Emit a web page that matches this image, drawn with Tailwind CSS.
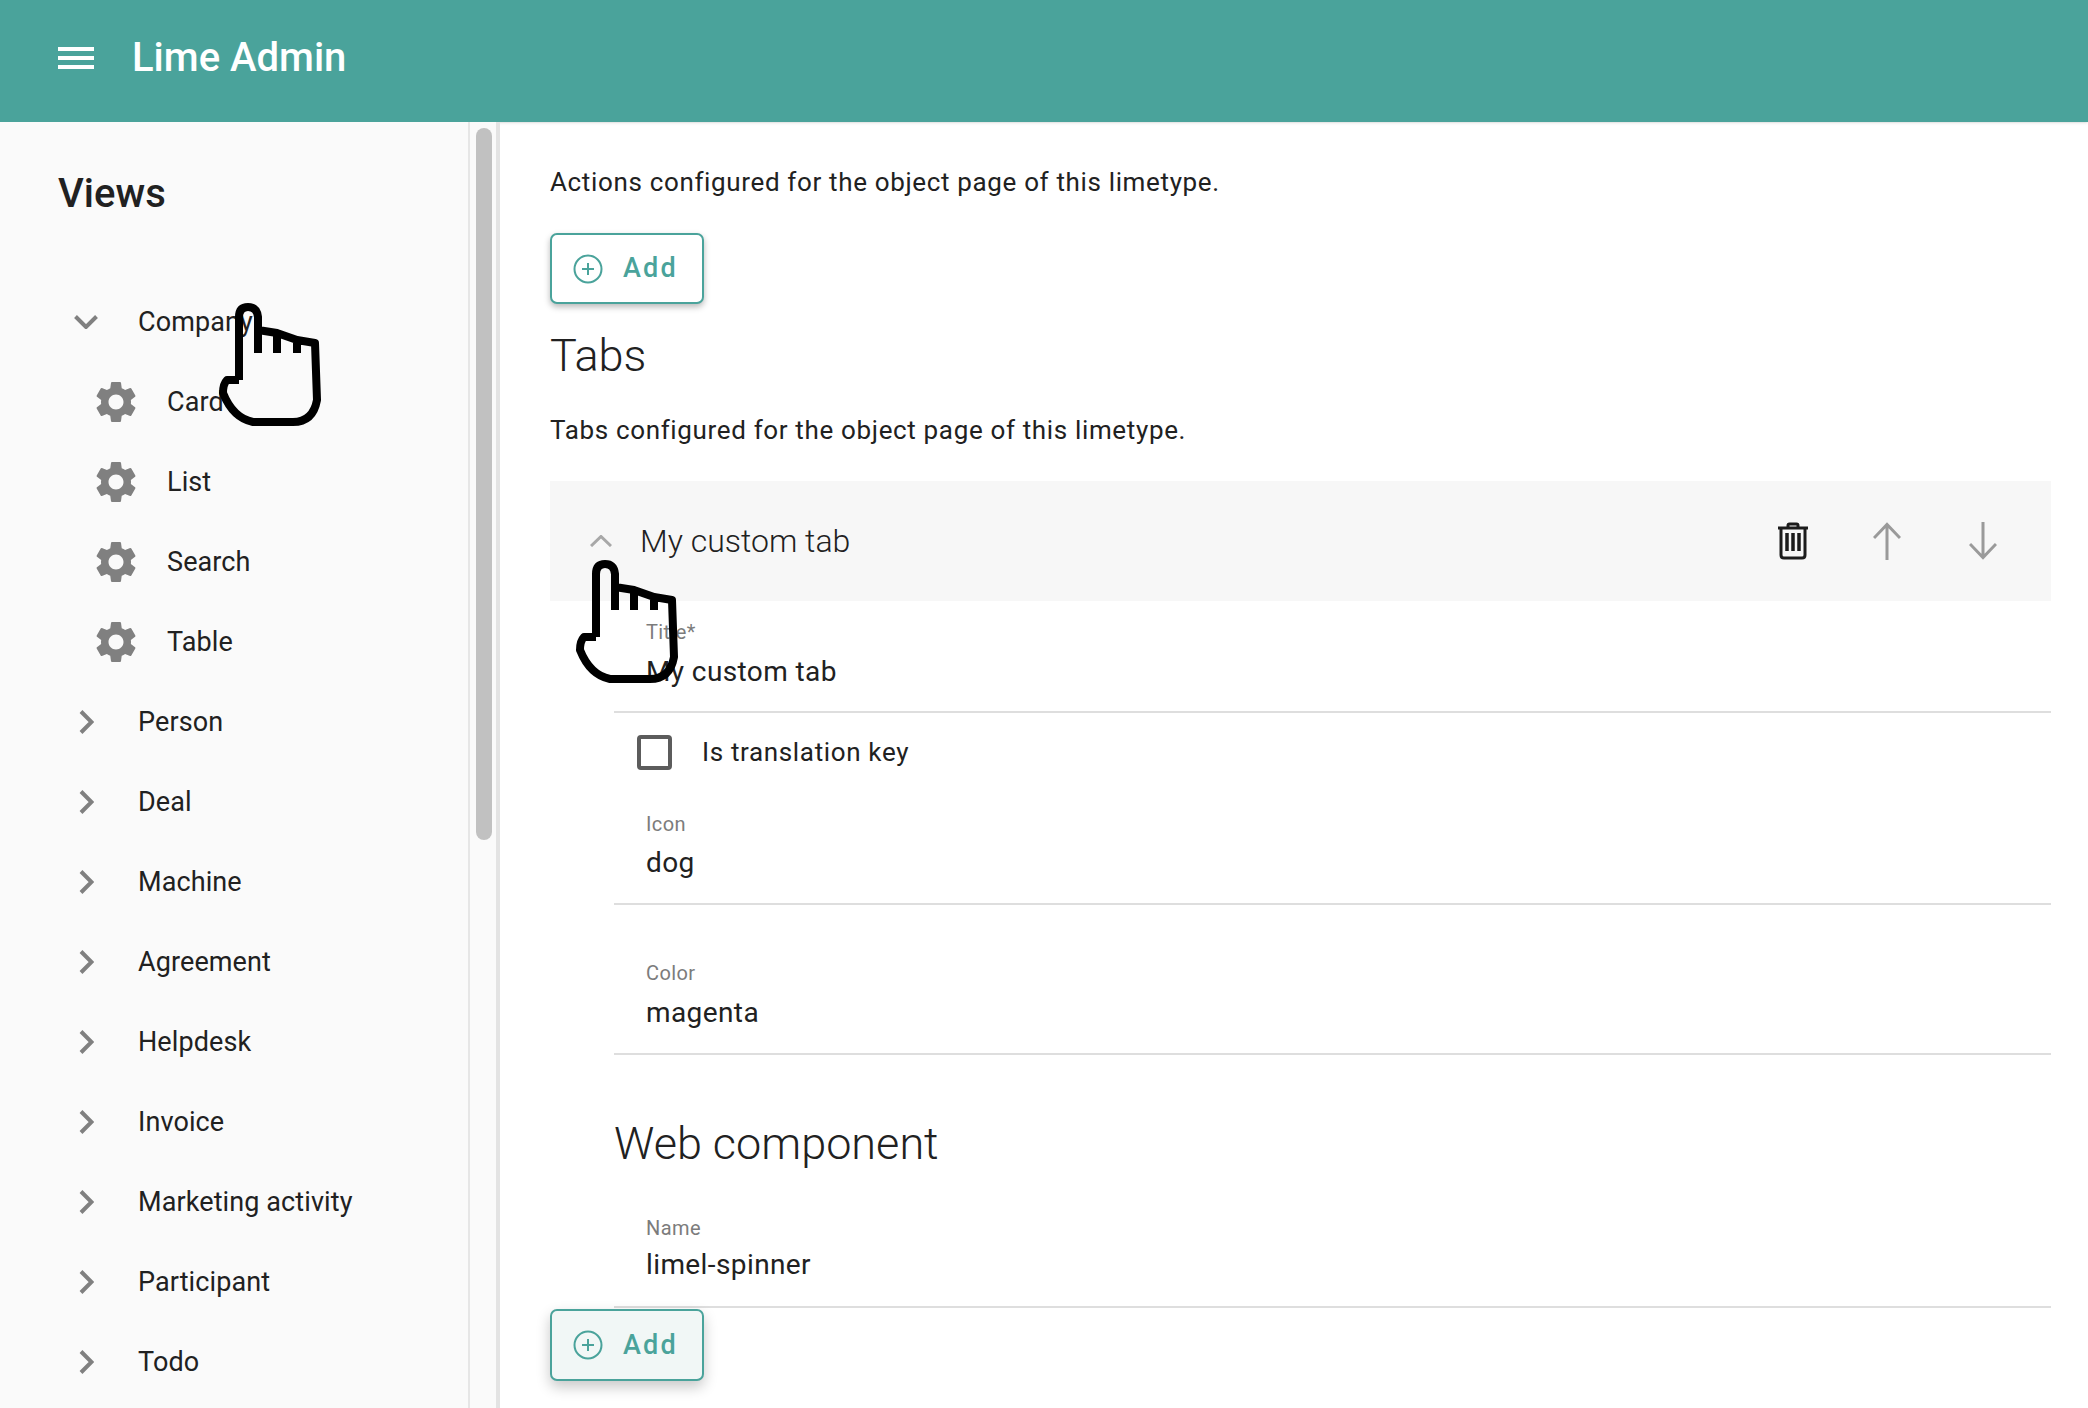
<!DOCTYPE html>
<html lang="en">
<head>
    <meta charset="UTF-8">
    <title>Lime Admin</title>
    <script src="https://cdn.jsdelivr.net/npm/@tailwindcss/browser@4"></script>
</head>
<body class="relative w-[2088px] h-[1408px] overflow-hidden bg-white font-[Roboto,sans-serif] text-[#212121]">
    <!-- Top bar -->
    <header class="h-[122px] bg-[#4aa39b] flex items-center pl-[58px] pb-[6px] shadow-sm">
        <div class="w-[36px] flex flex-col gap-[5px]">
            <span class="block h-[4px] bg-white"></span>
            <span class="block h-[4px] bg-white"></span>
            <span class="block h-[4px] bg-white"></span>
        </div>
        <h1 class="ml-[38px] text-[40px] font-medium text-white leading-none">Lime Admin</h1>
    </header>

    <div class="flex h-[1286px]">
        <!-- Sidebar -->
        <aside class="relative w-[470px] shrink-0 bg-[#fafafa] border-r-2 border-[#e6e6e6] overflow-hidden">
            <h2 class="ml-[58px] mt-[48px] h-[48px] text-[40px] leading-[48px] font-medium">Views</h2>
            <ul class="mt-[64px] text-[27px] tracking-[0.1px]">
                <li class="h-20 flex items-center">
                    <svg class="ml-[74px] w-[24px] h-[14px]" viewBox="0 0 24 14" fill="none" stroke="#808080" stroke-width="4"><path d="M1.5 1.5 12 12 22.5 1.5"/></svg>
                    <span class="ml-[40px]">Company</span>
                </li>
                <li class="h-20 flex items-center">
                    <svg class="ml-[91px] w-[50px] h-[50px]" viewBox="0 0 24 24" fill="#808080"><path d="M19.14,12.94c0.04-0.3,0.06-0.61,0.06-0.94c0-0.32-0.02-0.64-0.07-0.94l2.03-1.58c0.18-0.14,0.23-0.41,0.12-0.61 l-1.92-3.32c-0.12-0.22-0.37-0.29-0.59-0.22l-2.39,0.96c-0.5-0.38-1.03-0.7-1.62-0.94L14.4,2.81c-0.04-0.24-0.24-0.41-0.48-0.41 h-3.84c-0.24,0-0.43,0.17-0.47,0.41L9.25,5.35C8.66,5.59,8.12,5.92,7.63,6.29L5.24,5.33c-0.22-0.08-0.47,0-0.59,0.22L2.74,8.87 C2.62,9.08,2.66,9.34,2.86,9.48l2.03,1.58C4.84,11.36,4.8,11.69,4.8,12s0.02,0.64,0.07,0.94l-2.03,1.58 c-0.18,0.14-0.23,0.41-0.12,0.61l1.92,3.32c0.12,0.22,0.37,0.29,0.59,0.22l2.39-0.96c0.5,0.38,1.03,0.7,1.62,0.94l0.36,2.54 c0.05,0.24,0.24,0.41,0.48,0.41h3.84c0.24,0,0.44-0.17,0.47-0.41l0.36-2.54c0.59-0.24,1.13-0.56,1.62-0.94l2.39,0.96 c0.22,0.08,0.47,0,0.59-0.22l1.92-3.32c0.12-0.22,0.07-0.47-0.12-0.61L19.14,12.94z M12,15.6c-1.98,0-3.6-1.62-3.6-3.6 s1.62-3.6,3.6-3.6s3.6,1.62,3.6,3.6S13.98,15.6,12,15.6z"/></svg>
                    <span class="ml-[26px]">Card</span>
                </li>
                <li class="h-20 flex items-center">
                    <svg class="ml-[91px] w-[50px] h-[50px]" viewBox="0 0 24 24" fill="#808080"><path d="M19.14,12.94c0.04-0.3,0.06-0.61,0.06-0.94c0-0.32-0.02-0.64-0.07-0.94l2.03-1.58c0.18-0.14,0.23-0.41,0.12-0.61 l-1.92-3.32c-0.12-0.22-0.37-0.29-0.59-0.22l-2.39,0.96c-0.5-0.38-1.03-0.7-1.62-0.94L14.4,2.81c-0.04-0.24-0.24-0.41-0.48-0.41 h-3.84c-0.24,0-0.43,0.17-0.47,0.41L9.25,5.35C8.66,5.59,8.12,5.92,7.63,6.29L5.24,5.33c-0.22-0.08-0.47,0-0.59,0.22L2.74,8.87 C2.62,9.08,2.66,9.34,2.86,9.48l2.03,1.58C4.84,11.36,4.8,11.69,4.8,12s0.02,0.64,0.07,0.94l-2.03,1.58 c-0.18,0.14-0.23,0.41-0.12,0.61l1.92,3.32c0.12,0.22,0.37,0.29,0.59,0.22l2.39-0.96c0.5,0.38,1.03,0.7,1.62,0.94l0.36,2.54 c0.05,0.24,0.24,0.41,0.48,0.41h3.84c0.24,0,0.44-0.17,0.47-0.41l0.36-2.54c0.59-0.24,1.13-0.56,1.62-0.94l2.39,0.96 c0.22,0.08,0.47,0,0.59-0.22l1.92-3.32c0.12-0.22,0.07-0.47-0.12-0.61L19.14,12.94z M12,15.6c-1.98,0-3.6-1.62-3.6-3.6 s1.62-3.6,3.6-3.6s3.6,1.62,3.6,3.6S13.98,15.6,12,15.6z"/></svg>
                    <span class="ml-[26px]">List</span>
                </li>
                <li class="h-20 flex items-center">
                    <svg class="ml-[91px] w-[50px] h-[50px]" viewBox="0 0 24 24" fill="#808080"><path d="M19.14,12.94c0.04-0.3,0.06-0.61,0.06-0.94c0-0.32-0.02-0.64-0.07-0.94l2.03-1.58c0.18-0.14,0.23-0.41,0.12-0.61 l-1.92-3.32c-0.12-0.22-0.37-0.29-0.59-0.22l-2.39,0.96c-0.5-0.38-1.03-0.7-1.62-0.94L14.4,2.81c-0.04-0.24-0.24-0.41-0.48-0.41 h-3.84c-0.24,0-0.43,0.17-0.47,0.41L9.25,5.35C8.66,5.59,8.12,5.92,7.63,6.29L5.24,5.33c-0.22-0.08-0.47,0-0.59,0.22L2.74,8.87 C2.62,9.08,2.66,9.34,2.86,9.48l2.03,1.58C4.84,11.36,4.8,11.69,4.8,12s0.02,0.64,0.07,0.94l-2.03,1.58 c-0.18,0.14-0.23,0.41-0.12,0.61l1.92,3.32c0.12,0.22,0.37,0.29,0.59,0.22l2.39-0.96c0.5,0.38,1.03,0.7,1.62,0.94l0.36,2.54 c0.05,0.24,0.24,0.41,0.48,0.41h3.84c0.24,0,0.44-0.17,0.47-0.41l0.36-2.54c0.59-0.24,1.13-0.56,1.62-0.94l2.39,0.96 c0.22,0.08,0.47,0,0.59-0.22l1.92-3.32c0.12-0.22,0.07-0.47-0.12-0.61L19.14,12.94z M12,15.6c-1.98,0-3.6-1.62-3.6-3.6 s1.62-3.6,3.6-3.6s3.6,1.62,3.6,3.6S13.98,15.6,12,15.6z"/></svg>
                    <span class="ml-[26px]">Search</span>
                </li>
                <li class="h-20 flex items-center">
                    <svg class="ml-[91px] w-[50px] h-[50px]" viewBox="0 0 24 24" fill="#808080"><path d="M19.14,12.94c0.04-0.3,0.06-0.61,0.06-0.94c0-0.32-0.02-0.64-0.07-0.94l2.03-1.58c0.18-0.14,0.23-0.41,0.12-0.61 l-1.92-3.32c-0.12-0.22-0.37-0.29-0.59-0.22l-2.39,0.96c-0.5-0.38-1.03-0.7-1.62-0.94L14.4,2.81c-0.04-0.24-0.24-0.41-0.48-0.41 h-3.84c-0.24,0-0.43,0.17-0.47,0.41L9.25,5.35C8.66,5.59,8.12,5.92,7.63,6.29L5.24,5.33c-0.22-0.08-0.47,0-0.59,0.22L2.74,8.87 C2.62,9.08,2.66,9.34,2.86,9.48l2.03,1.58C4.84,11.36,4.8,11.69,4.8,12s0.02,0.64,0.07,0.94l-2.03,1.58 c-0.18,0.14-0.23,0.41-0.12,0.61l1.92,3.32c0.12,0.22,0.37,0.29,0.59,0.22l2.39-0.96c0.5,0.38,1.03,0.7,1.62,0.94l0.36,2.54 c0.05,0.24,0.24,0.41,0.48,0.41h3.84c0.24,0,0.44-0.17,0.47-0.41l0.36-2.54c0.59-0.24,1.13-0.56,1.62-0.94l2.39,0.96 c0.22,0.08,0.47,0,0.59-0.22l1.92-3.32c0.12-0.22,0.07-0.47-0.12-0.61L19.14,12.94z M12,15.6c-1.98,0-3.6-1.62-3.6-3.6 s1.62-3.6,3.6-3.6s3.6,1.62,3.6,3.6S13.98,15.6,12,15.6z"/></svg>
                    <span class="ml-[26px]">Table</span>
                </li>
                <li class="h-20 flex items-center"><svg class="ml-[79px] w-[15px] h-[24px]" viewBox="0 0 15 24" fill="none" stroke="#808080" stroke-width="4"><path d="M2 1.5 12.5 12 2 22.5"/></svg><span class="ml-[44px]">Person</span></li>
                <li class="h-20 flex items-center"><svg class="ml-[79px] w-[15px] h-[24px]" viewBox="0 0 15 24" fill="none" stroke="#808080" stroke-width="4"><path d="M2 1.5 12.5 12 2 22.5"/></svg><span class="ml-[44px]">Deal</span></li>
                <li class="h-20 flex items-center"><svg class="ml-[79px] w-[15px] h-[24px]" viewBox="0 0 15 24" fill="none" stroke="#808080" stroke-width="4"><path d="M2 1.5 12.5 12 2 22.5"/></svg><span class="ml-[44px]">Machine</span></li>
                <li class="h-20 flex items-center"><svg class="ml-[79px] w-[15px] h-[24px]" viewBox="0 0 15 24" fill="none" stroke="#808080" stroke-width="4"><path d="M2 1.5 12.5 12 2 22.5"/></svg><span class="ml-[44px]">Agreement</span></li>
                <li class="h-20 flex items-center"><svg class="ml-[79px] w-[15px] h-[24px]" viewBox="0 0 15 24" fill="none" stroke="#808080" stroke-width="4"><path d="M2 1.5 12.5 12 2 22.5"/></svg><span class="ml-[44px]">Helpdesk</span></li>
                <li class="h-20 flex items-center"><svg class="ml-[79px] w-[15px] h-[24px]" viewBox="0 0 15 24" fill="none" stroke="#808080" stroke-width="4"><path d="M2 1.5 12.5 12 2 22.5"/></svg><span class="ml-[44px]">Invoice</span></li>
                <li class="h-20 flex items-center"><svg class="ml-[79px] w-[15px] h-[24px]" viewBox="0 0 15 24" fill="none" stroke="#808080" stroke-width="4"><path d="M2 1.5 12.5 12 2 22.5"/></svg><span class="ml-[44px]">Marketing activity</span></li>
                <li class="h-20 flex items-center"><svg class="ml-[79px] w-[15px] h-[24px]" viewBox="0 0 15 24" fill="none" stroke="#808080" stroke-width="4"><path d="M2 1.5 12.5 12 2 22.5"/></svg><span class="ml-[44px]">Participant</span></li>
                <li class="h-20 flex items-center"><svg class="ml-[79px] w-[15px] h-[24px]" viewBox="0 0 15 24" fill="none" stroke="#808080" stroke-width="4"><path d="M2 1.5 12.5 12 2 22.5"/></svg><span class="ml-[44px]">Todo</span></li>
            </ul>
        </aside>

        <!-- Scrollbar -->
        <div class="w-[30px] shrink-0 bg-[#fafafa] border-r-4 border-[#e3e3e3] pt-[6px] pl-[6px]">
            <div class="w-4 h-[712px] rounded-full bg-[#c1c1c1]"></div>
        </div>

        <!-- Main content -->
        <main class="flex-1 pl-[50px] pr-[37px]">
            <p class="mt-[40px] h-10 text-[26px] leading-10 tracking-[0.65px]">Actions configured for the object page of this limetype.</p>
            <button class="mt-[31px] w-[154px] h-[71px] flex items-center pl-[21px] gap-[20px] rounded-[7px] border-2 border-[#4aa39b] bg-white shadow-[0_3px_6px_rgba(0,0,0,0.28)] text-[#4aa39b] text-[27px] font-medium tracking-[2.2px]">
                <svg class="w-[30px] h-[30px]" viewBox="0 0 30 30" fill="none" stroke="#4aa39b" stroke-width="2"><circle cx="15" cy="15" r="13.5"/><path d="M15 9v12M9 15h12"/></svg>
                Add
            </button>
            <h2 class="mt-[22px] h-[60px] text-[45px] leading-[60px] font-light">Tabs</h2>
            <p class="mt-[24px] h-10 text-[26px] leading-10 tracking-[0.65px]">Tabs configured for the object page of this limetype.</p>

            <!-- Accordion -->
            <div class="mt-[31px] h-[120px] bg-[#f7f7f7] flex items-center">
                <svg class="ml-[40px] w-[22px] h-[12px]" viewBox="0 0 22 12" fill="none" stroke="#a8a8a8" stroke-width="3"><path d="M1 11 11 1.5 21 11"/></svg>
                <span class="ml-[28px] text-[32px] font-light">My custom tab</span>
                <svg class="ml-auto w-[32px] h-[38px]" viewBox="0 0 32 38" fill="none" stroke="#1c1c1c" stroke-width="3"><path d="M1 6h30M11 5V3.5Q11 2 12.5 2h7Q21 2 21 3.5V5M4 6v27q0 3 3 3h18q3 0 3-3V6"/><path d="M10 11v18M16 11v18M22 11v18" stroke-width="3.5"/></svg>
                <svg class="ml-[64px] w-[28px] h-[38px]" viewBox="0 0 28 38" fill="none" stroke="#9a9a9a" stroke-width="3"><path d="M14 2v36M1 16 14 2.5 27 16"/></svg>
                <svg class="ml-[68px] mr-[54px] w-[28px] h-[38px]" viewBox="0 0 28 38" fill="none" stroke="#9a9a9a" stroke-width="3"><path d="M14 0v36M1 22 14 35.5 27 22"/></svg>
            </div>

            <div class="ml-[64px]">
                <div class="h-[112px] pt-[16px] border-b-2 border-[#dedede] pl-[32px]">
                    <div class="h-[30px] text-[20px] leading-[30px] text-[#7c7c7c] tracking-[0.4px]">Title*</div>
                    <div class="mt-[5px] h-10 text-[28px] leading-10 tracking-[0.4px]">My custom tab</div>
                </div>
                <div class="h-[78px] flex items-center pl-[23px]">
                    <span class="block w-[35px] h-[35px] rounded-[4px] border-[4px] border-[#5c5c5c]"></span>
                    <span class="ml-[30px] text-[26px] tracking-[0.65px]">Is translation key</span>
                </div>
                <div class="h-[114px] pt-[18px] border-b-2 border-[#dedede] pl-[32px]">
                    <div class="h-[30px] text-[20px] leading-[30px] text-[#7c7c7c] tracking-[0.4px]">Icon</div>
                    <div class="mt-[4px] h-10 text-[28px] leading-10 tracking-[0.4px]">dog</div>
                </div>
                <div class="h-[150px] pt-[53px] border-b-2 border-[#dedede] pl-[32px]">
                    <div class="h-[30px] text-[20px] leading-[30px] text-[#7c7c7c] tracking-[0.4px]">Color</div>
                    <div class="mt-[5px] h-10 text-[28px] leading-10 tracking-[0.4px]">magenta</div>
                </div>
                <h2 class="mt-[59px] h-[60px] text-[45px] leading-[60px] font-light">Web component</h2>
                <div class="mt-[39px] h-[95px] border-b-2 border-[#dedede] pl-[32px]">
                    <div class="h-[30px] text-[20px] leading-[30px] text-[#7c7c7c] tracking-[0.4px]">Name</div>
                    <div class="mt-[2px] h-10 text-[28px] leading-10 tracking-[0.4px]">limel-spinner</div>
                </div>
            </div>
            <button class="mt-[1px] w-[154px] h-[72px] flex items-center pl-[21px] gap-[20px] rounded-[7px] border-2 border-[#4aa39b] bg-[#f1f7f6] shadow-[0_6px_14px_rgba(0,0,0,0.22)] text-[#4aa39b] text-[27px] font-medium tracking-[2.2px]">
                <svg class="w-[30px] h-[30px]" viewBox="0 0 30 30" fill="none" stroke="#4aa39b" stroke-width="2"><circle cx="15" cy="15" r="13.5"/><path d="M15 9v12M9 15h12"/></svg>
                Add
            </button>
        </main>
    </div>

    <!-- Hand cursors from the recording -->
    <svg class="absolute left-[218px] top-[300px] w-[104px] h-[130px] blur-[0.5px]" viewBox="0 0 104 130" fill="none" stroke="#000" stroke-width="8" stroke-linejoin="round"><path d="M21 80V17Q21 7 30 7T40 17V53M40 30 59 33V53M59 33 79 40V53M79 40 97 43 99 100Q95 122 75 122H35Q15 118 5 93 5 84 9 80H21"/></svg>
    <svg class="absolute left-[575px] top-[557px] w-[104px] h-[130px] blur-[0.5px]" viewBox="0 0 104 130" fill="none" stroke="#000" stroke-width="8" stroke-linejoin="round"><path d="M21 80V17Q21 7 30 7T40 17V53M40 30 59 33V53M59 33 79 40V53M79 40 97 43 99 100Q95 122 75 122H35Q15 118 5 93 5 84 9 80H21"/></svg>
</body>
</html>
